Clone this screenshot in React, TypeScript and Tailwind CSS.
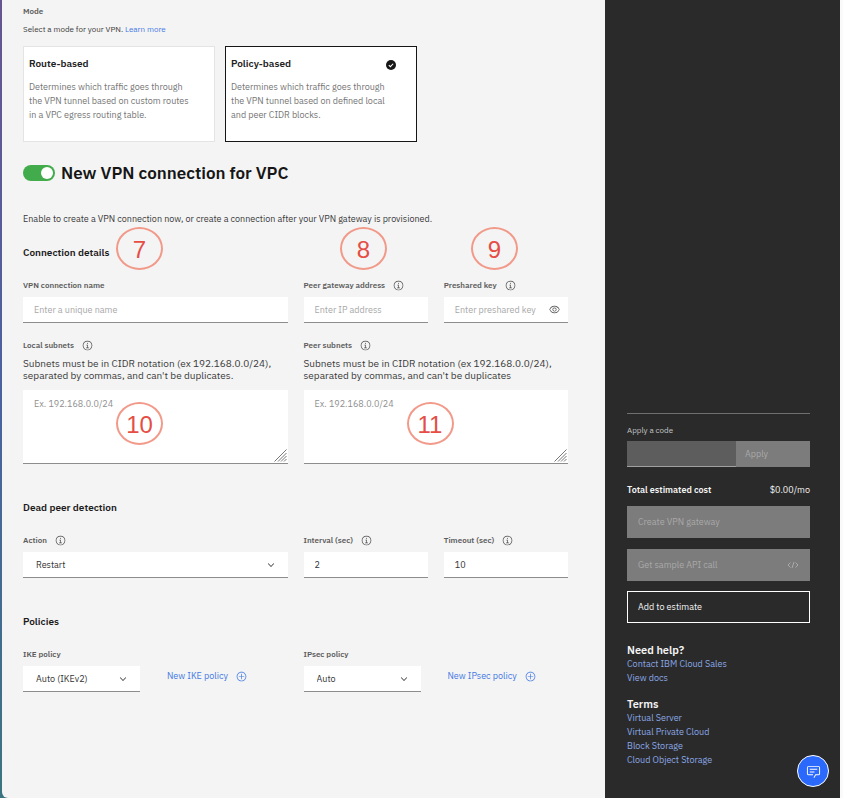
import { useState, type ReactNode } from "react";

function InfoIcon() {
  return (
    <svg viewBox="0 0 32 32" className="size-[11px] shrink-0 fill-[#4c4c4c]" aria-hidden="true">
      <path d="M17 22V14H13V16H15V22H12V24H20V22ZM16 8a1.5 1.5 0 1 0 1.5 1.5A1.5 1.5 0 0 0 16 8Z" />
      <path d="M16 30A14 14 0 1 1 30 16 14 14 0 0 1 16 30ZM16 4A12 12 0 1 0 28 16 12 12 0 0 0 16 4Z" />
    </svg>
  );
}

function ViewIcon() {
  return (
    <svg viewBox="0 0 32 32" className="size-[11px] fill-[#4c4c4c]" aria-hidden="true">
      <path d="M30.94 15.66A16.69 16.69 0 0 0 16 5 16.69 16.69 0 0 0 1.06 15.66a1 1 0 0 0 0 .68A16.69 16.69 0 0 0 16 27 16.69 16.69 0 0 0 30.94 16.34a1 1 0 0 0 0-.68ZM16 25c-5.3 0-10.9-3.93-12.93-9C5.1 10.93 10.7 7 16 7s10.9 3.93 12.93 9C26.9 21.07 21.3 25 16 25Z" />
      <path d="M16 10a6 6 0 1 0 6 6 6 6 0 0 0-6-6Zm0 10a4 4 0 1 1 4-4 4 4 0 0 1-4 4Z" />
    </svg>
  );
}

function AddIcon() {
  return (
    <svg viewBox="0 0 32 32" className="size-[11px] fill-current" aria-hidden="true">
      <path d="M16 4c6.6 0 12 5.4 12 12s-5.4 12-12 12S4 22.6 4 16 9.400 4 16 4m0-2C8.300 2 2 8.300 2 16s6.300 14 14 14 14-6.300 14-14S23.700 2 16 2z" />
      <path d="M24 15H17V8H15V15H8V17H15V24H17V17H24z" />
    </svg>
  );
}

function Marker({ n, place }: { n: number; place: string }) {
  return (
    <span
      className={`pointer-events-none absolute flex h-[43px] w-[47px] items-center justify-center rounded-[50%] border-2 border-[#f29a8a] pt-0.5 font-['Liberation_Sans',Arial,sans-serif] text-2xl leading-6 text-[#e54d45] ${place}`}
    >
      {n}
    </span>
  );
}

function Label({ id, text, info }: { id: string; text: string; info?: boolean }) {
  return (
    <div className="flex h-[14px] items-center gap-2">
      <label htmlFor={id} className="text-[8px] leading-[14px] font-semibold text-[#5c5c5c]">
        {text}
      </label>
      {info && <InfoIcon />}
    </div>
  );
}

function TextField({ id, text, info, placeholder, value, children }: {
  id: string; text: string; info?: boolean; placeholder?: string; value?: string; children?: ReactNode;
}) {
  return (
    <div>
      <Label id={id} text={text} info={info} />
      <div className="mt-[5px] flex h-[26px] items-center border-b border-[#8d8d8d] bg-white">
        <input
          id={id}
          defaultValue={value}
          placeholder={placeholder}
          className="h-full w-full min-w-0 pl-[11px] text-[9px] text-[#333] outline-none placeholder:text-[#a8a8a8]"
        />
        {children}
      </div>
    </div>
  );
}

function SelectField({ id, text, info, options }: { id: string; text: string; info?: boolean; options: string[] }) {
  return (
    <div>
      <Label id={id} text={text} info={info} />
      <div className="relative mt-[5px]">
        <select
          id={id}
          className="block h-[26px] w-full appearance-none border-b border-[#8d8d8d] bg-white pl-[13px] text-[9px] text-[#333] outline-none"
        >
          {options.map((o) => (
            <option key={o}>{o}</option>
          ))}
        </select>
        <svg viewBox="0 0 16 16" className="pointer-events-none absolute top-2 right-3 size-[10px] fill-[#222]" aria-hidden="true">
          <path d="M8 11 3 6 3.700 5.300 8 9.600 12.300 5.300 13 6z" />
        </svg>
      </div>
    </div>
  );
}

function Subnets({ id, text, help, children }: { id: string; text: string; help: string; children: ReactNode }) {
  return (
    <div>
      <Label id={id} text={text} info />
      <p className="mt-1.5 text-[10px] leading-3 text-[#3a3a3a]">{help}</p>
      <div className="relative mt-2">
        <textarea
          id={id}
          placeholder="Ex. 192.168.0.0/24"
          className="block h-[74px] w-full resize-none border-b border-[#8d8d8d] bg-white pt-2 pl-[11px] text-[9px] leading-3 outline-none placeholder:text-[#8f8f8f]"
        />
        <svg viewBox="0 0 13 13" className="pointer-events-none absolute right-px bottom-0.5 size-[13px] stroke-[#666]" aria-hidden="true">
          <path d="M0.500 12.500 12.500 0.500M4 12.500 12.500 4M7 12.500 12.500 7M10 12.500 12.500 10" strokeWidth="0.900" fill="none" />
        </svg>
        {children}
      </div>
    </div>
  );
}

function ModeCard({ title, text, selected, onSelect }: {
  title: string; text: string; selected: boolean; onSelect: () => void;
}) {
  return (
    <label
      className={`flex h-24 w-48 cursor-pointer flex-col border bg-white pt-2.5 pr-5 pl-[5px] ${selected ? "border-[#161616]" : "border-[#e4e4e4]"}`}
    >
      <input type="radio" name="mode" checked={selected} onChange={onSelect} className="sr-only" />
      <span className="flex h-[14px] items-center justify-between">
        <span className="text-[10px] leading-[14px] font-semibold text-[#222]">{title}</span>
        {selected && (
          <svg viewBox="0 0 16 16" className="mt-0.5 size-[10px]" aria-hidden="true">
            <circle cx="8" cy="8" r="8" fill="#161616" />
            <path d="M4.500 8.200 7 10.700 11.500 6" fill="none" stroke="#fff" strokeWidth="1.700" />
          </svg>
        )}
      </span>
      <span className="mt-[9px] text-[9px] leading-[14px] text-[#757575]">{text}</span>
    </label>
  );
}

function PolicyLink({ text }: { text: string }) {
  return (
    <a href="#" className="mb-[9px] flex items-center gap-2 text-[9px] leading-[14px] whitespace-nowrap text-[#4379e4]">
      {text}
      <AddIcon />
    </a>
  );
}

function LinkList({ title, links }: { title: string; links: string[] }) {
  return (
    <section>
      <h3 className="text-[11px] leading-[14px] font-semibold text-[#f4f4f4]">{title}</h3>
      <ul className="text-[9px] leading-[14px] text-[#8aa8e6]">
        {links.map((l) => (
          <li key={l}>
            <a href="#">{l}</a>
          </li>
        ))}
      </ul>
    </section>
  );
}

export default function App() {
  const [mode, setMode] = useState("policy");
  const h3 = "text-[10px] leading-4 font-semibold text-[#1c1c1c]";
  const disabled = "flex h-8 w-full items-center justify-between bg-[#7c7c7c] px-[11px] text-[9px] text-[#a9a9a9]";
  return (
    <div className="flex min-h-screen bg-[#fafafa] pr-[3px] font-['IBM_Plex_Sans',Roboto,sans-serif]">
      <div className="flex min-w-0 flex-1 bg-linear-to-b from-[#665591] via-[#4a62a0] to-[#3b7480] pl-0.5">
        <main className="min-w-0 flex-1 rounded-bl-md bg-[#f4f4f4] pt-1 pr-[37px] pl-[21px]">
          <h4 className="text-[8px] leading-[14px] font-semibold text-[#5c5c5c]">Mode</h4>
          <p className="mt-1 text-[8px] leading-[14px] text-[#3a3a3a]">
            Select a mode for your VPN.{" "}
            <a href="#" className="text-[#4379e4]">Learn more</a>
          </p>
          <div className="mt-2.5 flex gap-2.5">
            <ModeCard
              title="Route-based"
              text="Determines which traffic goes through the VPN tunnel based on custom routes in a VPC egress routing table."
              selected={mode === "route"}
              onSelect={() => setMode("route")}
            />
            <ModeCard
              title="Policy-based"
              text="Determines which traffic goes through the VPN tunnel based on defined local and peer CIDR blocks."
              selected={mode === "policy"}
              onSelect={() => setMode("policy")}
            />
          </div>
          <div className="mt-5 flex items-center gap-1.5">
            <label htmlFor="enable" className="flex">
              <input id="enable" type="checkbox" role="switch" aria-labelledby="enable-title" defaultChecked className="peer sr-only" />
              <span className="flex h-4 w-8 items-center rounded-full bg-[#8d8d8d] p-0.5 peer-checked:justify-end peer-checked:bg-[#42ab4c]">
                <span className="size-3 rounded-full bg-white" />
              </span>
            </label>
            <h2 id="enable-title" className="text-[17px] leading-[22px] font-semibold text-[#161616]">New VPN connection for VPC</h2>
          </div>
          <p className="mt-7 text-[9px] leading-[14px] text-[#3a3a3a]">
            Enable to create a VPN connection now, or create a connection after your VPN gateway is provisioned.
          </p>

          <section className="relative mt-[19px]">
            <h3 className={h3}>Connection details</h3>
            <Marker n={7} place="-top-[18px] left-[93px]" />
            <Marker n={8} place="-top-[18px] left-[317px]" />
            <Marker n={9} place="-top-[18px] left-[448px]" />
            <div className="mt-[17px] grid grid-cols-2 gap-x-4 gap-y-[15px]">
              <TextField id="name" text="VPN connection name" placeholder="Enter a unique name" />
              <div className="grid grid-cols-2 gap-4">
                <TextField id="peer" text="Peer gateway address" info placeholder="Enter IP address" />
                <TextField id="key" text="Preshared key" info placeholder="Enter preshared key">
                  <button type="button" aria-label="Show key" className="mr-2 shrink-0">
                    <ViewIcon />
                  </button>
                </TextField>
              </div>
              <Subnets
                id="local"
                text="Local subnets"
                help="Subnets must be in CIDR notation (ex 192.168.0.0/24), separated by commas, and can't be duplicates."
              >
                <Marker n={10} place="top-3 left-[93px]" />
              </Subnets>
              <Subnets
                id="peers"
                text="Peer subnets"
                help="Subnets must be in CIDR notation (ex 192.168.0.0/24), separated by commas, and can't be duplicates"
              >
                <Marker n={11} place="top-3 left-[103px]" />
              </Subnets>
            </div>
          </section>

          <section className="mt-9">
            <h3 className={h3}>Dead peer detection</h3>
            <div className="mt-[17px] grid grid-cols-2 gap-4">
              <SelectField id="action" text="Action" info options={["Restart", "Hold", "Clear", "None"]} />
              <div className="grid grid-cols-2 gap-4">
                <TextField id="interval" text="Interval (sec)" info value="2" />
                <TextField id="timeout" text="Timeout (sec)" info value="10" />
              </div>
            </div>
          </section>

          <section className="mt-9">
            <h3 className={h3}>Policies</h3>
            <div className="mt-[17px] grid grid-cols-2 gap-4">
              <div className="flex items-end gap-[27px]">
                <div className="w-[117px]">
                  <SelectField id="ike" text="IKE policy" options={["Auto (IKEv2)"]} />
                </div>
                <PolicyLink text="New IKE policy" />
              </div>
              <div className="flex items-end gap-[27px]">
                <div className="w-[117px]">
                  <SelectField id="ipsec" text="IPsec policy" options={["Auto"]} />
                </div>
                <PolicyLink text="New IPsec policy" />
              </div>
            </div>
          </section>
        </main>
      </div>

      <aside className="flex w-[235px] shrink-0 flex-col justify-end bg-[#2a2a2a] pr-[30px] pb-[31px] pl-[22px]">
        <div className="border-t border-[#6f6f6f] pt-[9px]">
          <label htmlFor="code" className="block text-[8px] leading-[14px] text-[#c6c6c6]">Apply a code</label>
          <div className="mt-1 flex h-[26px]">
            <input id="code" disabled className="w-[109px] min-w-0 border-b border-[#a0a0a0] bg-[#5d5d5d] px-2 text-[9px]" />
            <button type="button" disabled className="flex-1 bg-[#7c7c7c] pl-[9px] text-left text-[9px] text-[#a9a9a9]">Apply</button>
          </div>
        </div>
        <div className="mt-4 flex items-center justify-between text-[9px] leading-[14px] text-[#f4f4f4]">
          <strong className="font-semibold">Total estimated cost</strong>
          <span>$0.00/mo</span>
        </div>
        <button type="button" disabled className={`mt-[9px] ${disabled}`}>Create VPN gateway</button>
        <button type="button" disabled className={`mt-[11px] ${disabled}`}>
          Get sample API call
          <svg viewBox="0 0 12 8" className="h-2 w-3 fill-none stroke-current" aria-hidden="true">
            <path d="M3.500 1.500 1 4 3.500 6.500M8.500 1.500 11 4 8.500 6.500M7 1 5 7" />
          </svg>
        </button>
        <button type="button" className="mt-2.5 flex h-8 w-full items-center border border-white px-2.5 text-[9px] text-[#f4f4f4]">
          Add to estimate
        </button>
        <div className="mt-5 flex flex-col gap-3">
          <LinkList title="Need help?" links={["Contact IBM Cloud Sales", "View docs"]} />
          <LinkList title="Terms" links={["Virtual Server", "Virtual Private Cloud", "Block Storage", "Cloud Object Storage"]} />
        </div>
      </aside>

      <button
        type="button"
        aria-label="Open chat"
        className="fixed right-[14px] bottom-[11px] flex size-8 items-center justify-center rounded-full border border-white bg-[#2a69fb]"
      >
        <svg viewBox="0 0 32 32" className="size-[15px] fill-white" aria-hidden="true">
          <path d="M17.740 30 16 29l4-7h6a2 2 0 0 0 2-2V8a2 2 0 0 0-2-2H6a2 2 0 0 0-2 2v12a2 2 0 0 0 2 2h9v2H6a4 4 0 0 1-4-4V8a4 4 0 0 1 4-4h20a4 4 0 0 1 4 4v12a4 4 0 0 1-4 4h-4.840z" />
          <path d="M8 10H24V12H8zM8 16H18V18H8z" />
        </svg>
      </button>
    </div>
  );
}
